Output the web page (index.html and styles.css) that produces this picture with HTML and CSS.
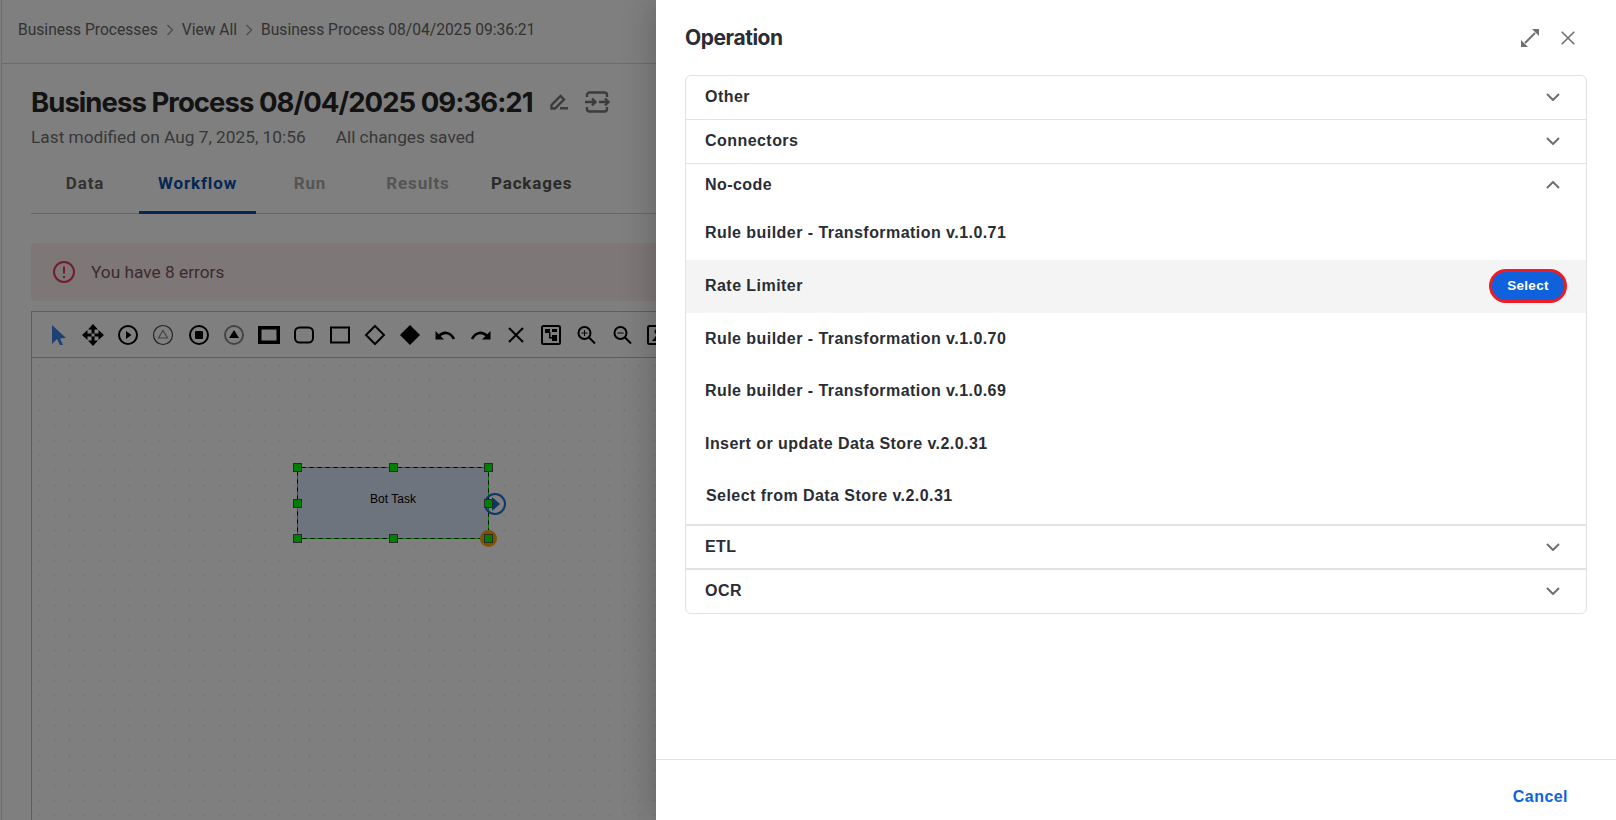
FILE: index.html
```html
<!DOCTYPE html>
<html lang="en">
<head>
  <meta charset="UTF-8">
  <title>Business Process</title>
  <link rel="stylesheet" href="styles.css">
</head>
<body>
  <div class="page">
    <div class="breadcrumb">
      <span>Business Processes</span>
      <svg class="crumb-sep" viewBox="0 0 8 12"><path d="M1.5 1l5 5-5 5"/></svg>
      <span>View All</span>
      <svg class="crumb-sep" viewBox="0 0 8 12"><path d="M1.5 1l5 5-5 5"/></svg>
      <span>Business Process 08/04/2025 09:36:21</span>
    </div>

    <div class="content">
      <div class="title-row">
        <h1>Business Process 08/04/2025 09:36:21</h1>
        <svg class="title-icon pencil" viewBox="0 0 18 16"><path d="M1.500 14.500V11L10.500 2l3.500 3.500-9 9z"/><path class="solid" d="M10 13h8v2.500h-8z"/></svg>
        <svg class="title-icon wide" viewBox="0 0 24 22"><path d="M2 6V4a2.500 2.500 0 0 1 2.500-2.500h15A2.500 2.500 0 0 1 22 4v2M2 16v2a2.500 2.500 0 0 0 2.500 2.500h15A2.500 2.500 0 0 0 22 18v-2M0 11h10M7 7.500l3.500 3.500-3.500 3.500M14 11h9M20 7.500l3.500 3.500-3.500 3.500"/></svg>
      </div>
      <div class="modified">
        <span>Last modified on Aug 7, 2025, 10:56</span>
        <span>All changes saved</span>
      </div>

      <div class="tabs">
        <div class="tab">Data</div>
        <div class="tab active">Workflow</div>
        <div class="tab disabled">Run</div>
        <div class="tab disabled">Results</div>
        <div class="tab">Packages</div>
      </div>

      <div class="alert">
        <svg class="alert-icon" viewBox="0 0 24 24"><circle cx="12" cy="12" r="10"/><path d="M12 6.500v7M12 16v2"/></svg>
        <span>You have 8 errors</span>
      </div>

      <div class="editor">
        <div class="toolbar">
          <svg viewBox="0 0 24 24"><path class="blue" d="M6 2l14 13-6 .5 3 6.500-3 0-3-6-5 5z"/></svg>
          <svg viewBox="0 0 24 24"><path class="bar" d="M12 6v12M6 12h12"/><rect class="hole" x="10.500" y="10.500" width="3" height="3"/><path class="fill" d="M12 1l5 5.500H7zM12 23l-5-5.500h10zM1 12l5.500-5v10zM23 12l-5.500 5V7z"/></svg>
          <svg viewBox="0 0 24 24"><circle class="line" cx="12" cy="12" r="9"/><path class="fill" d="M10 8l5.500 4-5.500 4z"/></svg>
          <svg viewBox="0 0 24 24"><circle class="thin" cx="12" cy="12" r="9.500"/><path class="thin-grey" d="M12 7.500l4.500 7.500h-9z"/></svg>
          <svg viewBox="0 0 24 24"><circle class="line" cx="12" cy="12" r="9"/><rect class="fill" x="8" y="8" width="8" height="8" rx="1"/></svg>
          <svg viewBox="0 0 24 24"><circle class="mid" cx="12" cy="12" r="9"/><path class="fill" d="M12 7l5 8H7z"/></svg>
          <svg viewBox="0 0 24 24"><rect class="thick" x="2.750" y="4.750" width="18.500" height="14.500"/></svg>
          <svg viewBox="0 0 24 24"><rect class="line" x="3" y="4.500" width="18" height="15" rx="4.500"/></svg>
          <svg viewBox="0 0 24 24"><rect class="line" x="3" y="4.500" width="18" height="15"/></svg>
          <svg viewBox="0 0 24 24"><path class="line" d="M12 3l9 9-9 9-9-9z"/></svg>
          <svg viewBox="0 0 24 24"><path class="fill" d="M12 2l10 10-10 10L2 12z"/></svg>
          <svg viewBox="0 0 24 24"><path class="curve" d="M6 13c4-4.500 11-4.500 15 3"/><path class="fill" d="M2.500 8v8.500H11z"/></svg>
          <svg viewBox="0 0 24 24"><path class="curve" d="M18 13c-4-4.500-11-4.500-15 3"/><path class="fill" d="M21.500 8v8.500H13z"/></svg>
          <svg viewBox="0 0 24 24"><path class="line" d="M5 5l14 14M19 5L5 19"/></svg>
          <svg viewBox="0 0 24 24"><rect class="line" x="3" y="3" width="18" height="18" rx="1.500"/><path class="fill" d="M6 6h5v4H6zM13 6h5v3h-5zM13 12h5v6h-5zM10 9h1.500v5H14v1.500h-4z"/></svg>
          <svg viewBox="0 0 24 24"><circle class="line" cx="10.500" cy="10" r="6"/><path class="line" d="M15 14.500l6 6"/><path class="thin-b" d="M7.500 10h6M10.500 7v6"/></svg>
          <svg viewBox="0 0 24 24"><circle class="line" cx="10.500" cy="10" r="6"/><path class="line" d="M15 14.500l6 6"/><path class="thin-b" d="M7.500 10h6"/></svg>
          <svg viewBox="0 0 24 24"><rect class="line" x="3" y="3" width="18" height="18" rx="1.500"/><circle class="fill" cx="12" cy="8.500" r="2.500"/><path class="fill" d="M7 18l5-6.500 5 6.500z"/></svg>
        </div>
        <div class="canvas">
          <svg class="task" viewBox="0 0 220 100">
            <rect class="task-box" x="7.500" y="7.500" width="191" height="71"/>
            <rect class="task-sel" x="7.500" y="7.500" width="191" height="71"/>
            <circle class="task-conn" cx="205" cy="44" r="10"/>
            <path class="task-arrow" d="M202 37l8 7-8 7z"/>
            <circle class="task-corner" cx="198.500" cy="78.500" r="8.500"/>
            <rect class="task-handle" x="3.500" y="3.500" width="8" height="8"/>
            <rect class="task-handle" x="99.500" y="3.500" width="8" height="8"/>
            <rect class="task-handle" x="194.500" y="3.500" width="8" height="8"/>
            <rect class="task-handle" x="3.500" y="39.500" width="8" height="8"/>
            <rect class="task-handle" x="194.500" y="39.500" width="8" height="8"/>
            <rect class="task-handle" x="3.500" y="74.500" width="8" height="8"/>
            <rect class="task-handle" x="99.500" y="74.500" width="8" height="8"/>
            <rect class="task-handle" x="194.500" y="74.500" width="8" height="8"/>
            <text class="task-label" x="103" y="39.500">Bot Task</text>
          </svg>
        </div>
      </div>
    </div>
  </div>

  <div class="overlay"></div>

  <div class="drawer">
    <div class="drawer-head">
      <h2>Operation</h2>
      <div class="drawer-actions">
        <svg class="expand" viewBox="0 0 18 18"><path class="solid" d="M11 0h7v7zM0 11v7h7z"/><path d="M14 4L4 14"/></svg>
        <svg class="close" viewBox="0 0 14 14"><path d="M.7.7l12.600 12.600M13.300.7L.7 13.300"/></svg>
      </div>
    </div>

    <div class="drawer-body">
      <div class="accordion">
        <div class="acc-head"><span>Other</span><svg class="chev" viewBox="0 0 14 8"><path d="M1 1l6 6 6-6"/></svg></div>
        <div class="acc-head"><span>Connectors</span><svg class="chev" viewBox="0 0 14 8"><path d="M1 1l6 6 6-6"/></svg></div>
        <div class="acc-head open"><span>No-code</span><svg class="chev" viewBox="0 0 14 8"><path d="M1 7l6-6 6 6"/></svg></div>
        <div class="acc-items">
          <div class="acc-item first">Rule builder - Transformation v.1.0.71</div>
          <div class="acc-item hover">Rate Limiter<button class="select-btn">Select</button></div>
          <div class="acc-item">Rule builder - Transformation v.1.0.70</div>
          <div class="acc-item">Rule builder - Transformation v.1.0.69</div>
          <div class="acc-item">Insert or update Data Store v.2.0.31</div>
          <div class="acc-item last">Select from Data Store v.2.0.31</div>
        </div>
        <div class="acc-head thick"><span>ETL</span><svg class="chev" viewBox="0 0 14 8"><path d="M1 1l6 6 6-6"/></svg></div>
        <div class="acc-head thick"><span>OCR</span><svg class="chev" viewBox="0 0 14 8"><path d="M1 1l6 6 6-6"/></svg></div>
      </div>
    </div>

    <div class="drawer-foot">
      <a class="cancel">Cancel</a>
    </div>
  </div>
</body>
</html>
```

FILE: styles.css
```css
html, body {
  margin: 0;
  padding: 0;
  height: 100%;
  overflow: hidden;
}

body {
  font-family: Roboto, Arial, sans-serif;
  color: #333;
  background-color: #fff;
}

.page {
  height: 820px;
  margin-left: 1px;
  border-left: 1px solid #ddd;
  display: flex;
  flex-direction: column;
}

.breadcrumb {
  height: 64px;
  flex-shrink: 0;
  padding: 0 0 3px 16px;
  display: flex;
  align-items: center;
  gap: 8px;
  font-size: 15.6px;
  color: #666;
  border-bottom: 1px solid #d9d9d9;
  box-sizing: border-box;
}

.crumb-sep {
  width: 8px;
  height: 12px;
  fill: none;
  stroke: #999;
  stroke-width: 1.3;
}

.content {
  flex: 1;
  padding: 19px 0 0 29px;
  display: flex;
  flex-direction: column;
  min-height: 0;
}

.title-row {
  display: flex;
  align-items: center;
  height: 38px;
}

h1 {
  margin: 0 17px 0 0;
  font-family: Inter, Arial, sans-serif;
  font-size: 27.5px;
  font-weight: 700;
  letter-spacing: -0.95px;
  color: #262626;
  white-space: nowrap;
}

.title-icon {
  fill: none;
  stroke: #777;
  stroke-width: 2.4;
}

.title-icon.pencil {
  width: 18px;
  height: 16px;
  margin-right: 17px;
}

.title-icon.wide {
  width: 24px;
  height: 22px;
  overflow: visible;
}

.title-icon .solid {
  fill: #777;
  stroke: none;
}

.modified {
  margin-top: 6px;
  display: flex;
  gap: 30px;
  font-size: 17.3px;
  line-height: 20px;
  color: #707070;
}

.tabs {
  margin-top: 8px;
  height: 59px;
  display: flex;
  border-bottom: 1px solid #ccc;
  box-sizing: border-box;
}

.tab {
  min-width: 108px;
  padding: 0 19px 4px;
  box-sizing: border-box;
  height: 59px;
  display: flex;
  align-items: center;
  justify-content: center;
  font-size: 17px;
  font-weight: 700;
  letter-spacing: 0.85px;
  color: #555;
}

.tab.active {
  color: #0b4fa8;
  border-bottom: 3px solid #0b4fa8;
  padding-bottom: 1px;
}

.tab:first-child {
  color: #666;
}

.tab.disabled {
  color: #aaa;
}

.alert {
  margin-top: 29px;
  height: 58px;
  flex-shrink: 0;
  background-color: #fbeef0;
  border-radius: 4px;
  padding-left: 21px;
  display: flex;
  align-items: center;
  gap: 15px;
  font-size: 17.3px;
  color: #7a5560;
}

.alert-icon {
  width: 24px;
  height: 24px;
  fill: none;
  stroke: #e8385a;
  stroke-width: 2;
}

.editor {
  margin-top: 10px;
  flex: 1;
  border: 1px solid #bbb;
  border-bottom: none;
  display: flex;
  flex-direction: column;
  min-height: 0;
}

.toolbar {
  height: 46px;
  flex-shrink: 0;
  padding-left: 13.5px;
  display: flex;
  align-items: center;
  gap: 11.25px;
  border-bottom: 1px solid #bbb;
  box-sizing: border-box;
}

.toolbar svg {
  width: 24px;
  height: 24px;
  flex-shrink: 0;
  fill: none;
  stroke: none;
}

.toolbar .blue { fill: #3a80f0; }
.toolbar .fill { fill: #000; }
.toolbar .line { stroke: #000; stroke-width: 2; fill: none; }
.toolbar .curve { stroke: #000; stroke-width: 2.600; fill: none; }
.toolbar .bar { stroke: #000; stroke-width: 3; fill: none; }
.toolbar .hole { fill: #fff; }
.toolbar .thick { stroke: #000; stroke-width: 3.500; fill: none; }
.toolbar .thin { stroke: #444; stroke-width: 1.200; fill: none; }
.toolbar .thin-grey { stroke: #888; stroke-width: 1.200; fill: none; }
.toolbar .mid { stroke: #888; stroke-width: 2; fill: none; }
.toolbar .thin-b { stroke: #000; stroke-width: 1; fill: none; }

.canvas {
  flex: 1;
  position: relative;
  background-image: radial-gradient(circle, #f0f0f0 1px, transparent 1.200px);
  background-size: 15px 15px;
  background-color: #fff;
}

.task {
  position: absolute;
  left: 258px;
  top: 102px;
  width: 220px;
  height: 100px;
  overflow: visible;
}

.task-box {
  fill: #dae8fc;
  stroke: #000;
  stroke-width: 1;
}

.task-sel {
  fill: none;
  stroke: #00ff00;
  stroke-width: 1;
  stroke-dasharray: 4 4;
}

.task-conn {
  fill: none;
  stroke: #1a6fd0;
  stroke-width: 2;
}

.task-arrow {
  fill: #1a6fd0;
}

.task-corner {
  fill: #ffa500;
}

.task-handle {
  fill: #00ff00;
  stroke: #555;
  stroke-width: 1;
}

.task-label {
  font-family: "Liberation Sans", Arial, sans-serif;
  font-size: 12px;
  fill: #000;
  text-anchor: middle;
  dominant-baseline: middle;
}

.overlay {
  position: absolute;
  inset: 0;
  background-color: rgba(0, 0, 0, 0.5);
}

.drawer {
  position: absolute;
  top: 0;
  right: 0;
  bottom: 0;
  width: 960px;
  background-color: #fff;
  box-shadow: -4px 0 30px rgba(0, 0, 0, 0.2);
  display: flex;
  flex-direction: column;
}

.drawer-head {
  height: 75px;
  flex-shrink: 0;
  padding: 0 41px 0 29px;
  box-sizing: border-box;
  display: flex;
  align-items: center;
  justify-content: space-between;
}

h2 {
  margin: 0;
  font-family: Inter, Arial, sans-serif;
  font-size: 21px;
  font-weight: 700;
  letter-spacing: -0.45px;
  color: #2a2d34;
}

.drawer-actions {
  display: flex;
  align-items: center;
  gap: 22px;
}

.expand {
  width: 18px;
  height: 18px;
  fill: none;
  stroke: #707070;
  stroke-width: 2;
}

.expand .solid {
  fill: #707070;
  stroke: none;
}

.close {
  width: 14px;
  height: 14px;
  fill: none;
  stroke: #707070;
  stroke-width: 1.600;
}

.drawer-body {
  flex: 1;
  padding: 0 29px;
}

.accordion {
  border: 1px solid #e2e2e2;
  border-radius: 6px;
  font-family: "Liberation Sans", Arial, sans-serif;
  font-size: 16px;
  font-weight: 700;
  letter-spacing: 0.45px;
  color: #2a2d34;
}

.acc-head {
  height: 44px;
  padding: 0 26px 2px 19px;
  box-sizing: border-box;
  display: flex;
  align-items: center;
  justify-content: space-between;
  border-top: 1px solid #e2e2e2;
}

.acc-head:first-child {
  border-top: none;
  height: 43px;
}

.acc-head.thick {
  border-top-width: 2px;
  padding-bottom: 0;
}

.acc-head:last-child {
  height: 45px;
}

.chev {
  width: 14px;
  height: 8px;
  fill: none;
  stroke: #6f6f6f;
  stroke-width: 2;
}

.acc-items {
  display: flex;
  flex-direction: column;
  padding-bottom: 1px;
}

.acc-item {
  height: 52.500px;
  padding: 0 19px;
  box-sizing: border-box;
  display: flex;
  align-items: center;
  justify-content: space-between;
}

.acc-item.first {
  height: 53px;
  padding-bottom: 1px;
}

.acc-item.last {
  padding-left: 20px;
}

.acc-item.hover {
  background-color: #f4f4f4;
  padding-bottom: 1px;
}

.select-btn {
  width: 78px;
  height: 34px;
  border: 3px solid #ee1c25;
  border-radius: 17px;
  background-color: #0f62dc;
  color: #fff;
  font-family: "Liberation Sans", Arial, sans-serif;
  font-size: 13.5px;
  font-weight: 700;
  letter-spacing: 0.300px;
  padding: 0;
}

.drawer-foot {
  height: 60px;
  flex-shrink: 0;
  border-top: 1px solid #e2e2e2;
  padding: 0 48px 0 0;
  display: flex;
  align-items: center;
  justify-content: flex-end;
}

.cancel {
  font-family: "Liberation Sans", Arial, sans-serif;
  font-size: 16px;
  font-weight: 700;
  letter-spacing: 0.45px;
  color: #0f62dc;
  margin-top: 13px;
}
```
